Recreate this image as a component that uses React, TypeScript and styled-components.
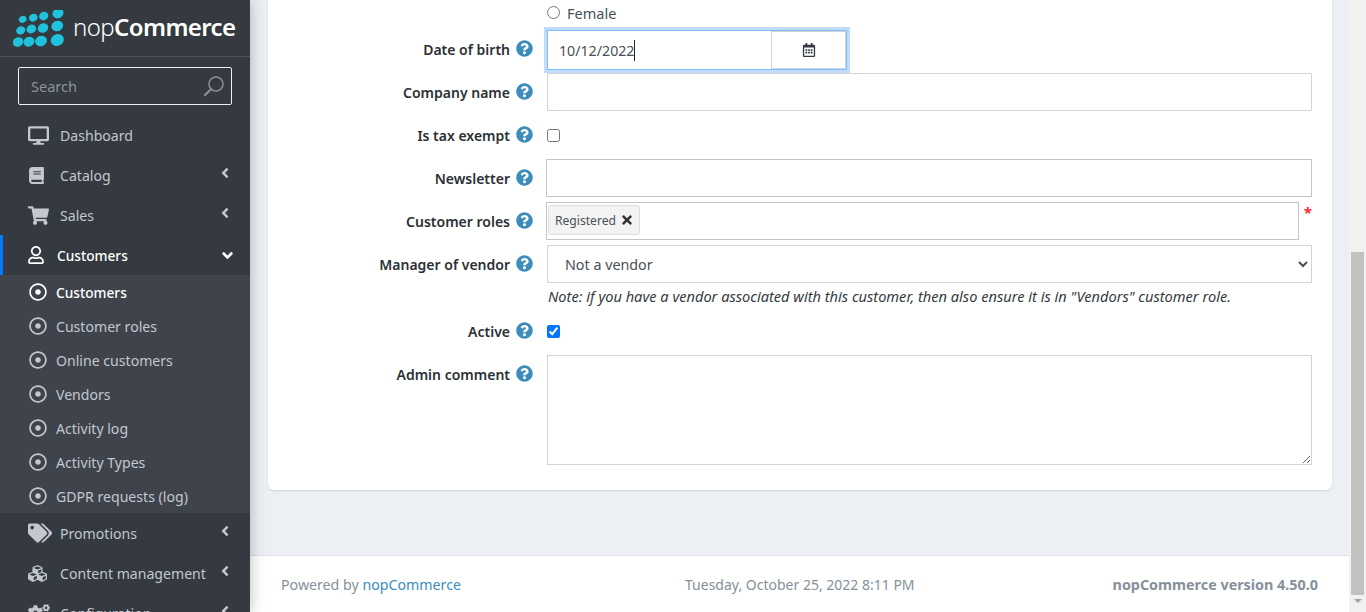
import React from 'react';
import styled, { createGlobalStyle } from 'styled-components';
import {
  FaDesktop, FaBook, FaShoppingCart, FaRegUser, FaRegDotCircle, FaTags, FaCubes, FaCogs,
  FaAngleLeft, FaAngleDown, FaQuestionCircle, FaRegCalendarAlt, FaTimes,
} from 'react-icons/fa';

const FONT = `"Noto Sans", "Open Sans", sans-serif`;

const Global = createGlobalStyle`
  html, body { margin: 0; padding: 0; height: 100%; overflow: hidden; }
  body { font-family: ${FONT}; font-size: 14.5px; color: #343a40; }
  * { box-sizing: border-box; }
`;

const Page = styled.div`
  display: flex;
  width: 1366px;
  height: 612px;
  overflow: hidden;
`;

const Sidebar = styled.aside`
  flex: 0 0 250px;
  background: #343a40;
  box-shadow: 0 0 14px rgba(0, 0, 0, 0.28);
  position: relative;
  z-index: 2;
  overflow: hidden;
`;

const Brand = styled.div`
  height: 57px;
  padding: 10px 0 0 13px;
  display: flex;
  align-items: flex-start;
  gap: 8px;
  border-bottom: 1px solid #4b545c;
`;

const Wordmark = styled.div`
  color: #fff;
  font-size: 24px;
  line-height: 34px;
  letter-spacing: -0.6px;
  font-weight: 300;
  b { font-weight: 600; }
`;

const SearchBox = styled.div`
  margin: 10px 18px 0;
  height: 38px;
  border: 1px solid #f0f0f0;
  border-radius: 2px;
  display: flex;
  align-items: center;
  justify-content: space-between;
  padding: 0 6px 0 12px;
  color: #8d939a;
`;

const Menu = styled.nav`
  padding-top: 10px;
  font-size: 14.1px;
`;

const TopItem = styled.div<{ $active?: boolean }>`
  height: 40px;
  display: flex;
  align-items: center;
  color: ${p => (p.$active ? '#fff' : '#c2c7d0')};
  border-left: 3px solid ${p => (p.$active ? '#007bff' : 'transparent')};
  padding-right: ${p => (p.$active ? 14 : 17)}px;
  font-weight: ${p => (p.$active ? 500 : 400)};
  font-size: ${p => (p.$active ? '13.7px' : 'inherit')};
`;

const TopIcon = styled.span<{ $active?: boolean }>`
  width: ${p => (p.$active ? 54 : 57)}px;
  padding-left: 24px;
  display: flex;
  justify-content: flex-start;
  svg { display: block; margin-left: ${p => (p.$active ? '0' : '1px')}; }
`;

const TopLabel = styled.span`
  flex: 1;
  white-space: nowrap;
`;

const Chevron = styled(FaAngleLeft)`
  margin-top: -4px;
`;

const SubMenu = styled.div`
  background: #3f444c;
`;

const SubItem = styled.div<{ $active?: boolean }>`
  height: 34px;
  display: flex;
  align-items: center;
  padding-left: 29px;
  gap: 9px;
  color: ${p => (p.$active ? '#fff' : '#c2c7d0')};
  font-weight: ${p => (p.$active ? 500 : 400)};
  font-size: ${p => (p.$active ? '13.7px' : 'inherit')};
`;

const Main = styled.main`
  flex: 1;
  min-width: 0;
  display: flex;
  flex-direction: column;
  background: #ecf0f5;
`;

const Content = styled.div`
  flex: 0 0 555px;
  padding: 0 17px 65px 18px;
`;

const Card = styled.section`
  height: 490px;
  background: #fff;
  border-radius: 0 0 6px 6px;
  box-shadow: 0 1px 2px rgba(0, 0, 0, 0.12);
`;

const Row = styled.div<{ $h?: number; $gap?: number }>`
  display: grid;
  grid-template-columns: 265px 1fr;
  column-gap: 14px;
  padding-right: 20px;
  min-height: ${p => p.$h ?? 38}px;
  margin-bottom: ${p => p.$gap ?? 5}px;
`;

const Label = styled.label`
  height: 38px;
  display: flex;
  align-items: center;
  justify-content: flex-end;
  gap: 6px;
  font-size: 14px;
  font-weight: 600;
  color: #2b3035;
  white-space: nowrap;
  svg { color: #3c8dbc; display: block; margin-top: -2px; }
`;

const Field = styled.div<{ $inset?: number }>`
  min-width: 0;
  margin-left: ${p => p.$inset ?? 0}px;
  display: flex;
  align-items: center;
  position: relative;
`;

const FemaleRow = styled.div`
  height: 30px;
  padding: 0 0 4px 279px;
  display: flex;
  align-items: center;
  gap: 7px;
  color: #495057;
  input { margin: -2px 0 0; width: 13px; height: 13px; }
`;

const DateGroup = styled.div`
  width: 300px;
  height: 40px;
  align-self: flex-start;
  border: 1px solid #80bdff;
  box-shadow: 0 0 0 3px #bfdcfb;
  display: flex;
  background: #fff;
`;

const DateValue = styled.div`
  flex: 1;
  padding-left: 11px;
  display: flex;
  align-items: center;
  font-size: 14.2px;
  color: #495057;
`;

const Caret = styled.span`
  width: 1px;
  height: 21px;
  background: #222;
`;

const CalendarButton = styled.div`
  width: 75px;
  border: 1px solid #ced4da;
  display: flex;
  align-items: center;
  justify-content: center;
  color: #343a40;
`;

const TextInput = styled.input`
  width: 100%;
  height: 38px;
  border: 1px solid #ced4da;
  padding: 0 12px;
  font: inherit;
  outline: none;
`;

const DarkInput = styled(TextInput)`
  border-color: #c4c4c4;
`;

const RolesBox = styled.div`
  flex: 1;
  height: 38px;
  border: 1px solid #c4c4c4;
  padding: 2px 1px;
  display: flex;
  align-items: flex-start;
`;

const Chip = styled.div`
  height: 30px;
  padding: 0 5px 0 6px;
  background: #f3f3f3;
  border: 1px solid #dedede;
  border-radius: 3px;
  display: flex;
  align-items: center;
  gap: 4px;
  font-size: 12.1px;
  color: #495057;
  svg { color: #333; display: block; }
`;

const Required = styled.span`
  width: 13px;
  text-align: right;
  color: #ff2a3c;
  font-size: 15px;
  font-weight: 700;
  line-height: 14px;
  margin-top: -18px;
  flex: none;
`;

const VendorSelect = styled.select`
  width: 100%;
  height: 38px;
  border: 1px solid #ced4da;
  background: #fff;
  padding: 0 4px 0 13px;
  font: inherit;
  font-size: 14.3px;
  color: #495057;
  outline: none;
`;

const Note = styled.div`
  margin-left: 280px;
  height: 29px;
  padding-top: 3px;
  font-style: italic;
  font-size: 14.6px;
  color: #343a40;
  white-space: nowrap;
`;

const Check = styled.input`
  margin: 0;
  width: 13px;
  height: 13px;
`;

const Comment = styled.textarea`
  display: block;
  width: 100%;
  height: 110px;
  border: 1px solid #ced4da;
  outline: none;
`;

const Footer = styled.footer`
  flex: 1;
  background: #fff;
  border-top: 1px solid #dee2e6;
  padding: 0 31px 0 31px;
  display: grid;
  grid-template-columns: 404px 1fr auto;
  align-items: center;
  font-size: 14.2px;
  color: #869099;
  a { color: #3c8dbc; text-decoration: none; }
`;

const FooterDate = styled.span`
  font-size: 14px;
`;

const Version = styled.b`
  font-size: 14.35px;
  font-weight: 700;
`;

const Scrollbar = styled.div`
  flex: 0 0 17px;
  background: #f1f1f1;
  display: flex;
  flex-direction: column;
  align-items: center;
  padding-top: 252px;
`;

const Thumb = styled.div`
  width: 13px;
  height: 343px;
  background: #c1c1c1;
`;

const DownArrow = styled.div`
  margin-top: 4px;
  width: 0;
  height: 0;
  border-left: 4px solid transparent;
  border-right: 4px solid transparent;
  border-top: 4px solid #a3a3a3;
`;

const Logo = () => (
  <svg width="52" height="38" viewBox="13 10 52 38" fill="#1fc3de">
    {[
      [18, 42, 5], [29, 41.7, 5.2], [41, 41, 5.6], [57.3, 40, 6.2],
      [20.7, 30.3, 4.3], [31.3, 29, 4.6], [43, 28, 5], [57.3, 26, 5.6],
      [22.7, 19.3, 3.6], [33.3, 17.7, 4], [43.7, 16, 4.4], [58, 13.3, 5.2],
    ].map(([x, y, r], i) => (
      <ellipse key={i} cx={x} cy={y} rx={r * 1.08} ry={r * 0.92} transform={`rotate(-25 ${x} ${y})`} />
    ))}
  </svg>
);

const SearchGlyph = () => (
  <svg width="22" height="22" viewBox="0 0 22 22" fill="none" stroke="#8a9095">
    <circle cx="13" cy="9" r="7" strokeWidth="1.5" />
    <path d="M8 14.2 2 20" strokeWidth="2.2" strokeLinecap="round" />
  </svg>
);

const topBefore = [
  { label: 'Dashboard', icon: <FaDesktop size={21} /> },
  { label: 'Catalog', icon: <FaBook size={17} />, arrow: true },
  { label: 'Sales', icon: <FaShoppingCart size={21} />, arrow: true },
];

const topAfter = [
  { label: 'Promotions', icon: <FaTags size={24} /> },
  { label: 'Content management', icon: <FaCubes size={19} /> },
  { label: 'Configuration', icon: <FaCogs size={22} /> },
];

const subs = ['Customers', 'Customer roles', 'Online customers', 'Vendors', 'Activity log', 'Activity Types', 'GDPR requests (log)'];

const Help = () => <FaQuestionCircle size={17} />;

export default function App() {
  return (
    <Page>
      <Global />
      <Sidebar>
        <Brand>
          <Logo />
          <Wordmark>nop<b>Commerce</b></Wordmark>
        </Brand>
        <SearchBox>
          <span>Search</span>
          <SearchGlyph />
        </SearchBox>
        <Menu>
          {topBefore.map(i => (
            <TopItem key={i.label}>
              <TopIcon>{i.icon}</TopIcon>
              <TopLabel>{i.label}</TopLabel>
              {i.arrow && <Chevron size={16} />}
            </TopItem>
          ))}
          <TopItem $active>
            <TopIcon $active><FaRegUser size={18} /></TopIcon>
            <TopLabel>Customers</TopLabel>
            <FaAngleDown size={17} />
          </TopItem>
          <SubMenu>
            {subs.map((s, i) => (
              <SubItem key={s} $active={i === 0}>
                <FaRegDotCircle size={18} />
                {s}
              </SubItem>
            ))}
          </SubMenu>
          {topAfter.map(i => (
            <TopItem key={i.label}>
              <TopIcon>{i.icon}</TopIcon>
              <TopLabel>{i.label}</TopLabel>
              <Chevron size={16} />
            </TopItem>
          ))}
        </Menu>
      </Sidebar>
      <Main>
        <Content>
          <Card>
            <FemaleRow>
              <input type="radio" name="gender" />
              Female
            </FemaleRow>
            <Row $h={40} $gap={3}>
              <Label>Date of birth <Help /></Label>
              <Field>
                <DateGroup>
                  <DateValue>10/12/2022<Caret /></DateValue>
                  <CalendarButton><FaRegCalendarAlt size={14} /></CalendarButton>
                </DateGroup>
              </Field>
            </Row>
            <Row>
              <Label>Company name <Help /></Label>
              <Field><TextInput /></Field>
            </Row>
            <Row>
              <Label>Is tax exempt <Help /></Label>
              <Field><Check type="checkbox" /></Field>
            </Row>
            <Row>
              <Label>Newsletter <Help /></Label>
              <Field $inset={-1}><DarkInput /></Field>
            </Row>
            <Row>
              <Label>Customer roles <Help /></Label>
              <Field $inset={-1}>
                <RolesBox>
                  <Chip>Registered <FaTimes size={14} /></Chip>
                </RolesBox>
                <Required>*</Required>
              </Field>
            </Row>
            <Row $gap={0}>
              <Label>Manager of vendor <Help /></Label>
              <Field>
                <VendorSelect defaultValue="0">
                  <option value="0">Not a vendor</option>
                </VendorSelect>
              </Field>
            </Row>
            <Note>Note: if you have a vendor associated with this customer, then also ensure it is in "Vendors" customer role.</Note>
            <Row>
              <Label>Active <Help /></Label>
              <Field><Check type="checkbox" defaultChecked /></Field>
            </Row>
            <Row $h={110}>
              <Label>Admin comment <Help /></Label>
              <Field><Comment /></Field>
            </Row>
          </Card>
        </Content>
        <Footer>
          <span>Powered by <a href="#">nopCommerce</a></span>
          <FooterDate>Tuesday, October 25, 2022 8:11 PM</FooterDate>
          <Version>nopCommerce version 4.50.0</Version>
        </Footer>
      </Main>
      <Scrollbar>
        <Thumb />
        <DownArrow />
      </Scrollbar>
    </Page>
  );
}
